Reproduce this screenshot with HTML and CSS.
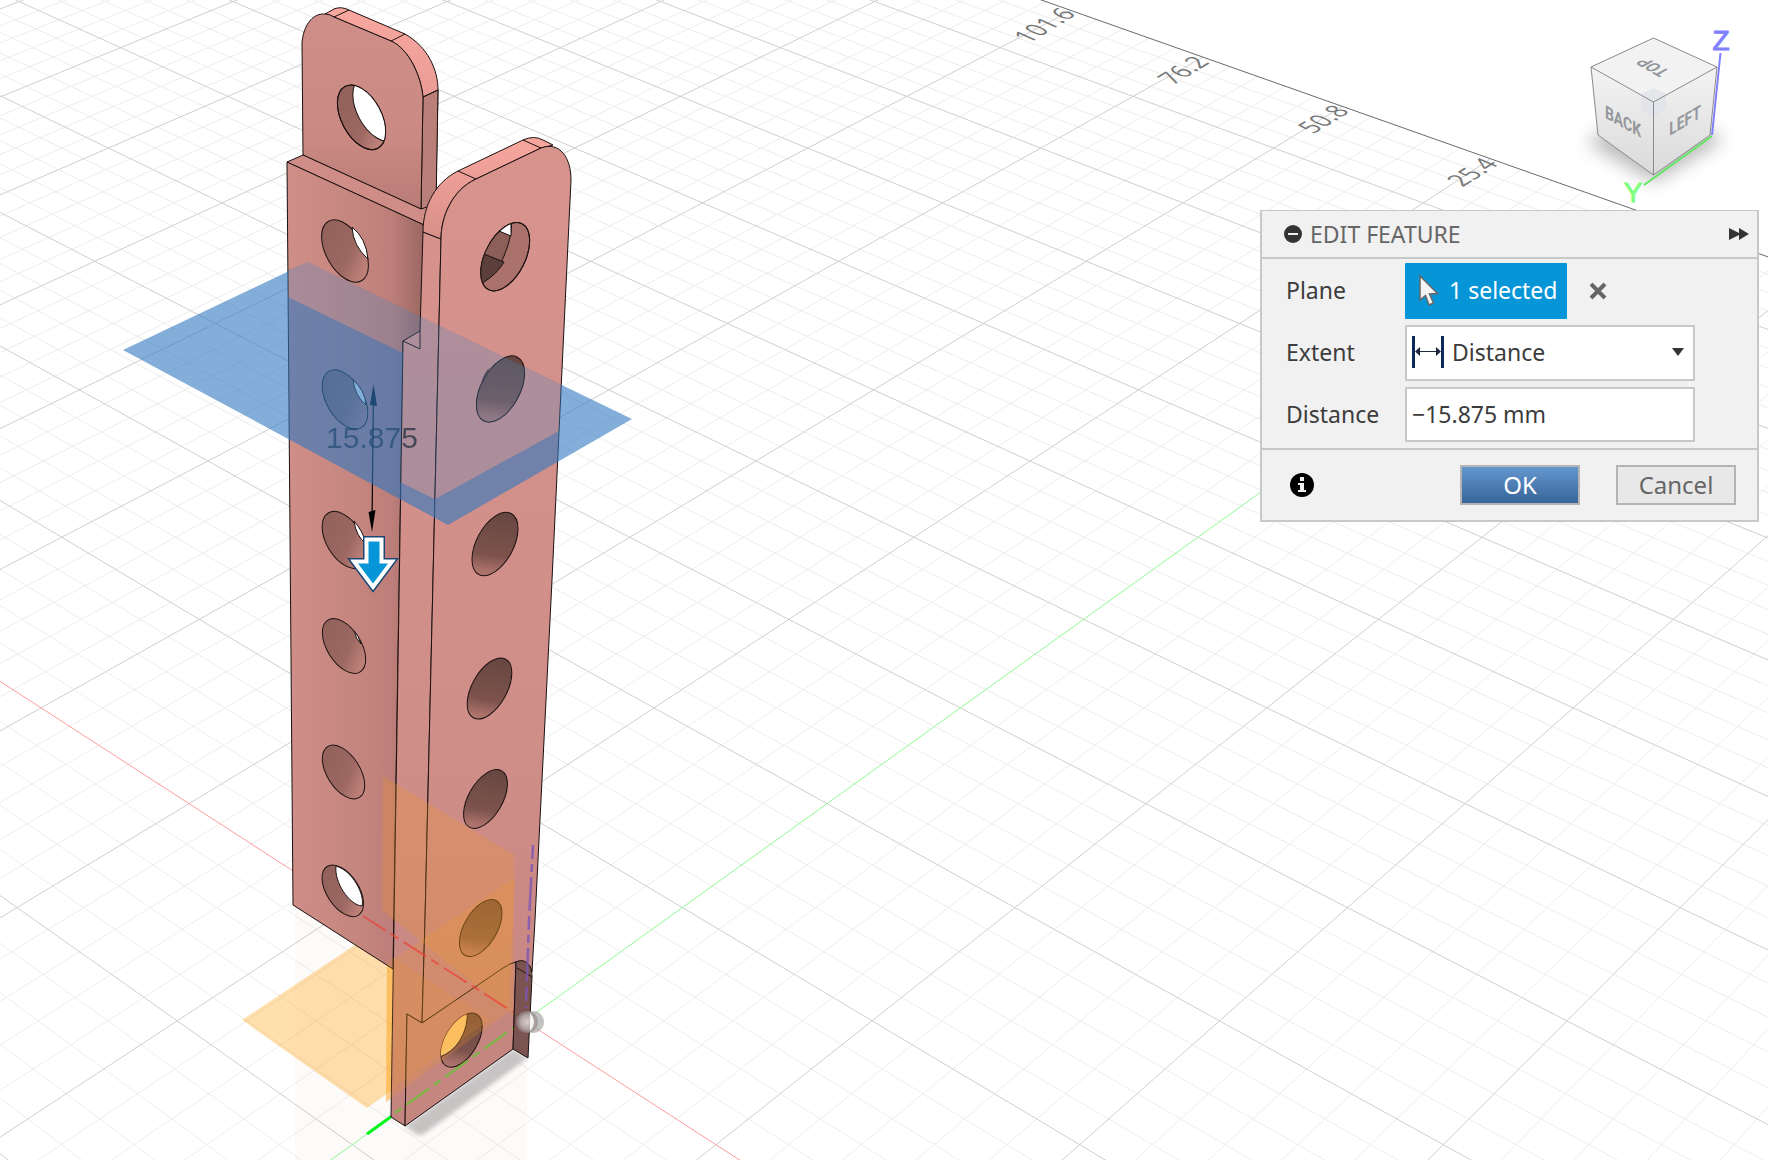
FILE: index.html
```html
<!DOCTYPE html>
<html lang="en">
<head>
<meta charset="utf-8">
<title>Edit Feature</title>
<link rel="stylesheet" href="styles.css">
</head>
<body>
<main class="workspace">
  <svg class="scene" viewBox="0 0 1768 1160" preserveAspectRatio="xMinYMin slice" role="img" aria-label="Model view">
    <defs>
      <linearGradient id="flange" x1="288" x2="422" y1="0" y2="0" gradientUnits="userSpaceOnUse">
        <stop offset="0" stop-color="#cf8e88"/><stop offset=".5" stop-color="#c68680"/><stop offset=".78" stop-color="#bd7e79"/><stop offset="1" stop-color="#9d6863"/>
      </linearGradient>
      <linearGradient id="tab" x1="0" x2="0" y1="15" y2="210" gradientUnits="userSpaceOnUse">
        <stop offset="0" stop-color="#cf8e88"/><stop offset=".65" stop-color="#ca8983"/><stop offset="1" stop-color="#b87b76"/>
      </linearGradient>
      <linearGradient id="rim" x1="0" x2="0" y1="0" y2="1">
        <stop offset="0" stop-color="#f9a79f"/><stop offset="1" stop-color="#d68f88"/>
      </linearGradient>
      <linearGradient id="face" x1="0" x2="0" y1="140" y2="1120" gradientUnits="userSpaceOnUse">
        <stop offset="0" stop-color="#d8938d"/><stop offset=".6" stop-color="#d08e89"/><stop offset="1" stop-color="#c4847f"/>
      </linearGradient>
      <linearGradient id="bore" x1="0" x2=".4" y1="0" y2="1">
        <stop offset="0" stop-color="#8f6059"/><stop offset=".7" stop-color="#9c6861"/><stop offset="1" stop-color="#bd8079"/>
      </linearGradient>
      <linearGradient id="bore-dark" x1="0" x2=".2" y1="0" y2="1">
        <stop offset="0" stop-color="#644540"/><stop offset=".75" stop-color="#7d534c"/><stop offset="1" stop-color="#ac736c"/>
      </linearGradient>
      <radialGradient id="ball"><stop offset="0" stop-color="#d8cccc"/><stop offset=".6" stop-color="#b5a5a5"/><stop offset="1" stop-color="#8f8585" stop-opacity=".6"/></radialGradient>
      <filter id="soft"><feGaussianBlur stdDeviation="2"/></filter>
      <clipPath id="c1"><ellipse cx="361.500" cy="117.300" rx="20" ry="35" transform="rotate(-28 361.5 117.3)"/></clipPath>
      <clipPath id="c3"><ellipse cx="505.200" cy="256.700" rx="20" ry="37" transform="rotate(27 505.2 256.7)"/></clipPath>
      <clipPath id="c4"><ellipse cx="461.500" cy="1040.200" rx="16" ry="30" transform="rotate(31 461.5 1040.2)"/></clipPath>
    </defs>

    <g class="grid">
      <path class="grid-minor" id="grid-minor"/>
      <path class="grid-major" id="grid-major"/>
      <path class="grid-edge" id="grid-edge"/>
      <path class="axis-x" id="axis-x"/>
      <path class="axis-y" id="axis-y"/>
    </g>
    <g class="grid-label">
      <text transform="translate(1044 25) rotate(-31) skewX(35)" dy="8">101.6</text>
      <text transform="translate(1183 70) rotate(-31) skewX(35)" dy="8">76.2</text>
      <text transform="translate(1323 119) rotate(-31) skewX(35)" dy="8">50.8</text>
      <text transform="translate(1472 172) rotate(-32) skewX(35)" dy="8">25.4</text>
    </g>

    <!-- floor reflection and contact shadow -->
    <path d="M295 906L393 969V1160H295ZM393 1117L405 1126 527 1058V1160H393Z" fill="#c88a84" opacity=".04"/>
    <path d="M405 1126L513 1049 528 1058 424 1134Q418 1137 412 1131Z" fill="#bdbaba" opacity=".85" filter="url(#soft)"/>
    <path d="M242 1020L364 939 490 1020 367 1108Z" fill="#ffa514" opacity=".35"/>
    <path d="M387 963L394 960V1097L386 1102Z" fill="#ffa514" opacity=".35"/>
    <path d="M367 1134L392 1116" stroke="#00f51a" stroke-width="3"/>

    <!-- rear tab -->
    <g class="edge">
      <path fill="url(#rim)" d="M325 14L334 9Q341 6 349 10L405 34C428 47 438 70 438 90L436 192 421 209 423 97C421 76 409 49 391 41L334 17Z"/>
      <path fill="#bb7f79" d="M423 97L438 90 436 206 421 209Z"/>
      <path fill="url(#tab)" d="M303 155L302 43C303 28 311 13 325 14Q330 14 334 17L391 41C409 49 421 76 423 97L421 209Z"/>
      <path fill="none" d="M334 17L349 10M391 41L405 34M423 97L438 90"/>
      <ellipse cx="361.500" cy="117.300" rx="20" ry="35" transform="rotate(-28 361.5 117.3)" fill="url(#bore)"/>
      <g clip-path="url(#c1)">
        <ellipse cx="377" cy="109" rx="20" ry="35" transform="rotate(-28 377 109)" fill="#fff"/>
      </g>
      <ellipse cx="361.500" cy="117.300" rx="20" ry="35" transform="rotate(-28 361.5 117.3)" fill="none"/>
    </g>

    <!-- left flange -->
    <g class="edge">
      <path fill="#d08c86" d="M287 162L303 155 421 209 430 206 424 225Z"/>
      <path fill="url(#flange)" d="M287 162L424 225 421 332 403 341 393 969 293 905Z"/>
      <g fill="url(#bore)">
        <ellipse cx="345" cy="251" rx="19" ry="34" transform="rotate(-29 345 251)"/>
        <ellipse cx="345" cy="399.500" rx="18.500" ry="32.500" transform="rotate(-30 345 399.5)"/>
        <ellipse cx="344.500" cy="540" rx="18" ry="31.500" transform="rotate(-31 344.5 540)"/>
        <ellipse cx="344" cy="646" rx="17" ry="30.500" transform="rotate(-32 344 646)"/>
        <ellipse cx="343.500" cy="772" rx="16.500" ry="30" transform="rotate(-32 343.5 772)"/>
        <ellipse cx="342.800" cy="890.800" rx="16" ry="29" transform="rotate(-33 342.8 890.8)"/>
      </g>
      <g fill="#fff">
        <path d="M352 227Q353 246 368 259Q366 238 352 227Z"/>
        <path d="M353 380Q355 396 366 405Q365 390 353 380Z"/>
        <path d="M354 521Q356 536 366 544Q363 531 354 521Z"/>
        <path d="M354 631Q356 639 361 644Q359 636 354 631Z"/>
        <path d="M336 866C334 882 349 905 362 906C365 895 353 871 336 866Z"/>
      </g>
    </g>

    <!-- right flange -->
    <g class="edge">
      <path fill="url(#face)" d="M423 232L441 239 425 920 422 1023 407 1014 405 1126 391 1117 403 341 420 331Z"/>
      <path fill="url(#rim)" d="M423 232C423 205 436 182 458 171L523 140Q534 135 543 140L553 145 541 148 476 179C452 190 441 217 441 239Z"/>
      <path fill="url(#face)" d="M441 239C441 217 452 190 476 179L541 148C560 141 571 158 571 180L552 580 535 920 532 972C530 962 522 959 513 963L422 1023 425 920Z"/>
      <path fill="none" d="M458 171L476 179M523 140L541 148M420 331V349L403 341"/>
      <path fill="#c68680" d="M422 1023L503 968Q510 963 516 962L513 1049 405 1126 407 1014Z"/>
      <path fill="#7b5350" d="M516 962C524 958 532 963 532 977L528 1058 513 1049Z"/>
      <path fill="none" d="M517 968L532 977"/>
      <g fill="url(#bore-dark)">
        <ellipse cx="505.200" cy="256.700" rx="20" ry="37" transform="rotate(27 505.2 256.7)" fill="#aa726b"/>
        <ellipse cx="500.500" cy="389" rx="19.500" ry="36" transform="rotate(28 500.5 389)"/>
        <ellipse cx="495" cy="544" rx="18.500" ry="34.500" transform="rotate(28 495 544)"/>
        <ellipse cx="489.500" cy="688.500" rx="17.500" ry="33.500" transform="rotate(29 489.5 688.5)"/>
        <ellipse cx="485.500" cy="799" rx="17" ry="32.500" transform="rotate(30 485.5 799)"/>
        <ellipse cx="480.700" cy="928" rx="16.500" ry="31.500" transform="rotate(30 480.7 928)"/>
        <ellipse cx="461.500" cy="1040.200" rx="16" ry="30" transform="rotate(31 461.5 1040.2)"/>
      </g>
      <g clip-path="url(#c3)">
        <path fill="#8d5f59" d="M474 215H511Q514 232 504 256Q498 272 483 282L470 290Z"/>
        <path fill="#5c3f3b" d="M470 248L484 254 504 262Q497 274 484 282L470 290Z"/>
        <path fill="#fff" d="M490 215H511V236L499 231Z"/>
      </g>
      <ellipse cx="505.200" cy="256.700" rx="20" ry="37" transform="rotate(27 505.2 256.7)" fill="none"/>
      <g clip-path="url(#c4)"><path fill="#ffd07e" d="M435 1010H467Q469 1026 459 1042Q452 1052 440 1057Z"/></g>
      <path d="M480 388Q482 376 489 368Q488 376 484 381Z" fill="#4a3431" stroke="none"/>
    </g>

    <!-- origin planes and axes over the model -->
    <g fill="#f59b20">
      <path d="M383 776L514 855 513 1015 382 910Z" opacity=".23"/>
      <path d="M515 878L508 1012 386 1102 387 963Z" opacity=".2"/>
      <path d="M364 939L490 1020 394 1087V960Z" opacity=".15"/>
    </g>
    <path d="M363 916L513 1012" stroke="#e8463c" stroke-width="2" stroke-dasharray="27 6 9 6" opacity=".75"/>
    <path d="M395 1113L513 1028" stroke="#6fbf3a" stroke-width="2.500" stroke-dasharray="8 6 28 6" opacity=".8"/>
    <path d="M533 845L529 920 526 1008" stroke="#7c56b4" stroke-width="2.500" stroke-dasharray="14 5 8 5 34 5" fill="none" opacity=".8"/>
    <circle cx="533" cy="1022" r="11" fill="#aaa" opacity=".7"/>
    <circle cx="527" cy="1022" r="11" fill="url(#ball)"/>
    <path d="M530 1013Q538 1022 530 1031Z" fill="#fff" opacity=".85"/>

    <!-- distance dimension -->
    <path d="M373.500 390L372 526" stroke="#000" stroke-width="1.200" fill="none"/>
    <path d="M373.500 384L377 406 370 405Z"/>
    <path d="M372 532L375.500 510 368.500 512Z"/>
    <text class="dimension" x="372" y="448">15.875</text>

    <!-- construction plane: solid where in front, faint where hidden -->
    <path fill="#2f78c0" fill-rule="evenodd" opacity=".6" d="M123 350L308 262 632 419 448 525ZM288 271L308 262 561 385 559 431 435 499 400 482 403 353 288 297Z"/>
    <path fill="#3f86c8" opacity=".26" d="M288 271L308 262 561 385 559 431 435 499 400 482 403 353 288 297Z"/>

    <path d="M364 537H384V559H397L373 591 349 559H364Z" fill="#0696d7" stroke="#1c4672" stroke-width="2"/>
    <path d="M366.500 539.500H381.500V561.500H392L373 587 354 561.500H366.500Z" fill="#0696d7" stroke="#fff" stroke-width="4"/>
  </svg>

  <aside class="overlay">
    <svg class="viewcube" viewBox="0 0 208 210" role="img" aria-label="View cube">
      <defs>
        <linearGradient id="cube-side" x1="0" x2="0" y1="0" y2="1"><stop offset="0" stop-color="#f3f3f3"/><stop offset="1" stop-color="#dadada"/></linearGradient>
        <filter id="cube-blur" x="-30%" y="-50%" width="160%" height="200%"><feGaussianBlur stdDeviation="9"/></filter>
      </defs>
      <path d="M26 142L94 104 164 140 94 182Z" fill="#777" opacity=".5" filter="url(#cube-blur)"/>
      <path d="M31 67L93.500 102V175L38 135Z" fill="url(#cube-side)"/>
      <path d="M93.500 102L157 67 150 135 93.500 175Z" fill="url(#cube-side)"/>
      <path d="M93.500 38L157 67 93.500 102 31 67Z" fill="#f2f2f2"/>
      <path d="M93.500 88L106 94V109L93.500 117 81 109V94Z" fill="#dfe2e8" opacity=".75"/>
      <path class="cube-edge" d="M93.500 38L157 67 93.500 102 31 67ZM31 67L38 135 93.500 175 150 135 157 67M93.500 102V175"/>
      <path d="M160.500 53L152 135" stroke="#8080ff" stroke-width="2"/>
      <path d="M152 136L84 185" stroke="#5fe65f" stroke-width="2"/>
      <g class="cube-label">
        <text font-size="15" transform="translate(93 67) rotate(209) skewX(-32)" dy="5">TOP</text>
        <text font-size="16" transform="translate(63 122) rotate(29) skewX(29)" dy="5">BACK</text>
        <text font-size="16" transform="translate(125 121) rotate(-30) skewX(-30)" dy="5">LEFT</text>
      </g>
      <text class="axis-name" x="161" y="50" fill="#8080ff" stroke="#8080ff">Z</text>
      <text class="axis-name" x="73" y="202" fill="#80ff80" stroke="#80ff80">Y</text>
    </svg>

    <form class="panel">
      <header class="panel-head">
        <button type="button" class="icon-button" aria-label="Collapse">
          <svg width="18" height="18" viewBox="0 0 18 18"><circle cx="9" cy="9" r="9" fill="#333"/><path d="M4 9H14" stroke="#f1f1f1" stroke-width="2"/></svg>
        </button>
        <h1>EDIT FEATURE</h1>
        <button type="button" class="icon-button" aria-label="Expand">
          <svg width="20" height="12" viewBox="0 0 20 12"><path d="M0 0L10 5V0L20 6 10 12V7L0 12Z" fill="#333"/></svg>
        </button>
      </header>
      <div class="panel-body">
        <label for="plane">Plane</label>
        <div class="plane-row">
          <button type="button" class="selection" id="plane">
            <svg width="20" height="32" viewBox="0 0 20 32"><path d="M1 2V26L6.500 21.500 10 31 14.500 29 10.500 20 18.500 19.500Z" fill="#f4f4f4" stroke="#666" stroke-width="1.500"/></svg>
            1 selected
          </button>
          <button type="button" class="icon-button" aria-label="Clear selection">
            <svg width="18" height="18" viewBox="0 0 18 18"><path d="M2 2L16 16M16 2L2 16" stroke="#666" stroke-width="4"/></svg>
          </button>
        </div>
        <label for="extent">Extent</label>
        <div class="select-box">
          <svg width="32" height="32" viewBox="0 0 32 32"><path d="M1.500 0V32M30.500 0V32" stroke="#0e2a5c" stroke-width="3"/><path d="M5 15.500H27" stroke="#1d2740"/><path d="M3 15.500L8 11V20ZM29 15.500L24 11V20Z" fill="#1d2740"/></svg>
          <select id="extent"><option>Distance</option></select>
          <svg class="caret" width="12" height="8" viewBox="0 0 12 8"><path d="M0 0H12L6 8Z" fill="#333"/></svg>
        </div>
        <label for="distance">Distance</label>
        <input id="distance" type="text" value="−15.875 mm">
      </div>
      <footer class="panel-foot">
        <button type="button" class="icon-button info" aria-label="Information">
          <svg width="24" height="24" viewBox="0 0 24 24"><circle cx="12" cy="12" r="12"/><path d="M10 4H14V8H10ZM8 10H14V17H16V19H8V17H10V12H8Z" fill="#f1f1f1"/></svg>
        </button>
        <button type="submit" class="action primary">OK</button>
        <button type="button" class="action">Cancel</button>
      </footer>
    </form>
  </aside>
</main>
<script src="grid.js"></script>
</body>
</html>
```
FILE: styles.css
```css
* { box-sizing: border-box; }

body {
  margin: 0;
  background: #fff;
  color: #3c3c3c;
  font: 23px/28px "Noto Sans", "Open Sans", sans-serif;
}

.workspace {
  display: grid;
  grid-template: 100vh / 100%;
  overflow: hidden;
}

.scene, .overlay { grid-area: 1 / 1; }
.scene { width: 100%; height: 100%; display: block; }

.grid path { fill: none; stroke-width: 1; }
.grid .grid-minor { stroke: #ededed; }
.grid .grid-major { stroke: #cfcfcf; }
.grid .grid-edge { stroke: #6a6a6a; }
.grid .axis-x { stroke: #ff9c9c; }
.grid .axis-y { stroke: #90fa90; }

.grid-label {
  font: 22px "Open Sans", sans-serif;
  fill: #787878;
  text-anchor: middle;
}

.edge { stroke: #1a1110; stroke-width: 1; stroke-linejoin: round; }

.dimension {
  font: 30px "Liberation Sans", Arial, sans-serif;
  fill: #000;
  opacity: .65;
  text-anchor: middle;
}

.overlay {
  justify-self: end;
  align-self: start;
  display: flex;
  flex-direction: column;
  align-items: flex-end;
}

.viewcube { width: 208px; height: 210px; }
.cube-edge { fill: none; stroke: #8a8a8a; stroke-width: 1; }
.cube-label {
  font-family: Roboto, sans-serif;
  font-weight: 700;
  fill: #94979b;
  text-anchor: middle;
}
.axis-name {
  font: 28px "Liberation Sans", Arial, sans-serif;
  stroke-width: 1;
  text-anchor: middle;
}

.panel {
  width: 499px;
  margin-right: 9px;
  background: #f1f1f1;
  border: 2px solid #c8c8c8;
  border-top-width: 1px;
}

button, select, input { font: inherit; color: inherit; margin: 0; }
svg { flex: none; }

.icon-button {
  display: flex;
  padding: 0;
  border: 0;
  background: none;
}

.panel-head {
  display: flex;
  align-items: center;
  gap: 8px;
  height: 48px;
  padding: 0 8px 0 22px;
  border-bottom: 2px solid #c8c8c8;
}
.panel-head h1 {
  flex: 1;
  margin: 0;
  font-size: 23px;
  font-weight: 400;
  color: #666;
}

.panel-body {
  display: grid;
  grid-template-columns: 119px 290px;
  align-items: center;
  row-gap: 6px;
  padding: 4px 24px 6px;
}
.panel-body label { padding-bottom: 2px; }

.plane-row { display: flex; align-items: center; gap: 22px; }

.selection {
  display: flex;
  align-items: center;
  gap: 10px;
  width: 162px;
  height: 56px;
  padding: 0 0 2px 14px;
  border: 0;
  border-radius: 1px;
  background: #0696d7;
  color: #fff;
  white-space: nowrap;
}

.select-box {
  display: grid;
  grid-template-columns: 32px 1fr 12px;
  align-items: center;
  height: 56px;
  padding: 0 9px 2px 5px;
  background: #fff;
  border: 2px solid #c8c8c8;
}
.select-box > * { grid-row: 1; }
.select-box > svg { pointer-events: none; }
.select-box select {
  grid-column: 2 / 4;
  height: 50px;
  padding: 0 0 0 8px;
  border: 0;
  appearance: none;
  background: none;
}
.select-box .caret { grid-column: 3; }

.panel-body input {
  width: 100%;
  height: 55px;
  padding: 0 5px 2px;
  border: 2px solid #c8c8c8;
  background: #fff;
}

.panel-foot {
  display: flex;
  align-items: center;
  gap: 36px;
  height: 72px;
  padding: 0 21px 0 28px;
  border-top: 2px solid #c8c8c8;
}
.panel-foot .info { margin-right: auto; }

.action {
  width: 120px;
  height: 40px;
  padding: 0;
  border: 2px solid #b4b4b4;
  background: #e8e8e8;
  color: #666;
  font-size: 24px;
  line-height: 32px;
}
.primary {
  background: linear-gradient(#6496cf, #376599);
  color: #fff;
}
```
FILE: grid.js
```js
// Ground grid: a = index of lines parallel to Y, b = index of lines parallel to X.
function project(a, b) {
  const depth = 22.41 + b - a;
  return [
    (322.5 + (3893 * (a + b) + 4530) / depth).toFixed(1),
    (-1630 + 59405 / depth).toFixed(1)
  ].join(' ');
}

const A_MIN = -14, A_MAX = 10, B_MIN = -8, B_EDGE = 9.8;

function alongY(a) { return `M${project(a, B_MIN)}L${project(a, B_EDGE)}`; }
function alongX(b) { return `M${project(A_MIN, b)}L${project(A_MAX, b)}`; }

let minor = '', major = '';
for (let i = A_MIN * 5; i <= A_MAX * 5; i++) {
  if (i === 0) continue;
  if (i % 5) minor += alongY(i / 5); else major += alongY(i / 5);
}
for (let i = B_MIN * 5; i < B_EDGE * 5; i++) {
  if (i === 0) continue;
  if (i % 5) minor += alongX(i / 5); else major += alongX(i / 5);
}

document.getElementById('grid-minor').setAttribute('d', minor);
document.getElementById('grid-major').setAttribute('d', major);
document.getElementById('grid-edge').setAttribute('d', alongX(B_EDGE));
document.getElementById('axis-x').setAttribute('d', alongX(0));
document.getElementById('axis-y').setAttribute('d', alongY(0));
```
